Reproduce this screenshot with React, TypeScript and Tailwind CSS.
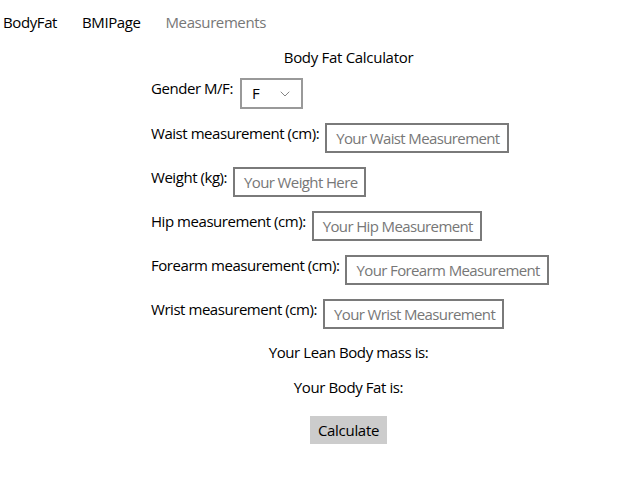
import { ChevronDown } from "lucide-react";

const fields = [
  { label: "Waist measurement (cm):", placeholder: "Your Waist Measurement" },
  { label: "Weight (kg):", placeholder: "Your Weight Here" },
  { label: "Hip measurement (cm):", placeholder: "Your Hip Measurement" },
  { label: "Forearm measurement (cm):", placeholder: "Your Forearm Measurement" },
  { label: "Wrist measurement (cm):", placeholder: "Your Wrist Measurement" },
];

export default function App() {
  return (
    <div className="min-h-[500px] w-[625px] bg-white text-[15px] text-black font-['Open_Sans',sans-serif]">
      {/* Tabs */}
      <div className="flex h-[44px] items-center pl-[3px] tracking-[-0.4px]">
        <span className="mr-[25px]">BodyFat</span>
        <span className="mr-[25px]">BMIPage</span>
        <span className="text-[#777]">Measurements</span>
      </div>

      <div className="ml-[151px] flex w-[395px] flex-col">
        <div className="mt-[3px] h-[20px] text-center leading-5 tracking-[-0.3px]">Body Fat Calculator</div>

        <div className="mt-[11px] flex flex-col gap-[14px]">
          <div className="flex items-start gap-[7px]">
            <span className="whitespace-nowrap leading-5 tracking-[-0.45px]">Gender M/F:</span>
            <div className="flex h-[31px] w-[63px] shrink-0 items-center justify-between border-2 border-[#999] pl-[10px] pr-[8px]">
              <span>F</span>
              <ChevronDown className="h-4 w-4 text-[#666]" strokeWidth={1.2} />
            </div>
          </div>

          {fields.map((f) => (
            <div key={f.label} className="flex items-start gap-[6px]">
              <span className="whitespace-nowrap leading-5 tracking-[-0.45px]">{f.label}</span>
              <div className="flex h-[30px] shrink-0 items-center border-2 border-[#7a7a7a] pl-[9px] pr-[7px] text-[#777] tracking-[-0.62px]">
                <span className="whitespace-nowrap">{f.placeholder}</span>
              </div>
            </div>
          ))}
        </div>

        <div className="mt-[13px] h-[20px] text-center leading-5 tracking-[-0.4px]">Your Lean Body mass is:</div>
        <div className="mt-[15px] h-[20px] text-center leading-5 tracking-[-0.4px]">Your Body Fat is:</div>

        <div className="mt-[19px] flex justify-center">
          <button className="flex h-[28px] w-[77px] items-center justify-center bg-[#ccc] tracking-[-0.3px]">
            Calculate
          </button>
        </div>
      </div>
    </div>
  );
}
